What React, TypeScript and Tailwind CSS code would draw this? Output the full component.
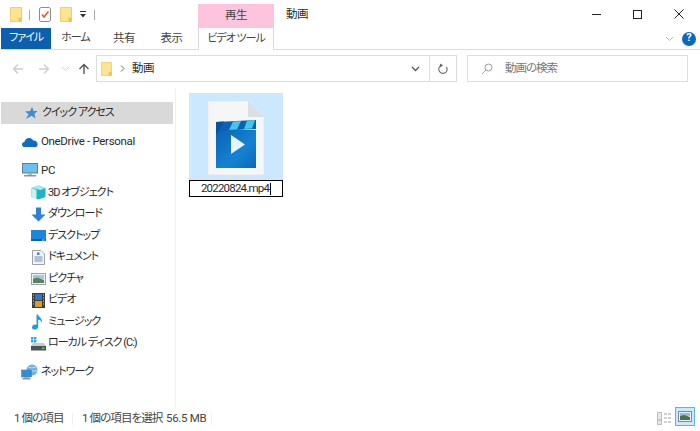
import { ReactNode } from 'react';

const FolderIcon = ({ w = 12, h = 15 }: { w?: number; h?: number }) => (
  <svg width={w} height={h} viewBox="0 0 12 15" className="shrink-0">
    <path d="M0.5 0.5H11.5V14.5H0.5Z" fill="#fde58f" stroke="#ebcf7a" />
    <path d="M8.5 10.5H11.5V14.5H8.5Z" fill="#eec34f" />
  </svg>
);

const ChecklistIcon = () => (
  <svg width="12" height="15" viewBox="0 0 12 15" className="shrink-0">
    <path d="M0.5 1.5L2 0.5H10L11.5 1.5V13.5L10 14.5H2L0.5 13.5Z" fill="#fff" stroke="#8c8c8c" />
    <path d="M3 7.5L5 10L9.5 4.5" fill="none" stroke="#e0562b" strokeWidth="1.5" />
  </svg>
);

const NavArrow = ({ dir, color }: { dir: 'left' | 'right' | 'up'; color: string }) => {
  const rot = dir === 'left' ? 0 : dir === 'right' ? 180 : 90;
  return (
    <svg width="12" height="12" viewBox="0 0 12 12" style={{ transform: `rotate(${rot}deg)` }} className="shrink-0">
      <path d="M11 6H1.5M6 1.5L1.5 6L6 10.5" fill="none" stroke={color} strokeWidth="1.4" />
    </svg>
  );
};

const SmallChevron = ({ color, width = 1 }: { color: string; width?: number }) => (
  <svg width="9" height="6" viewBox="0 0 9 6" className="shrink-0">
    <path d="M1 1L4.5 4.5L8 1" fill="none" stroke={color} strokeWidth={width} />
  </svg>
);

const StarIcon = () => (
  <svg width="14" height="14" viewBox="0 0 14 14">
    <path d="M8 0.8L9.6 5H13.6L10.4 7.8L11.6 12.6L7.6 9.8L2 13L4.6 8.2L1 5.4L6.2 5Z" fill="#3b8ed8" />
  </svg>
);

const CloudIcon = () => (
  <svg width="16" height="10" viewBox="0 0 16 10">
    <path d="M3 10C1 10 0 8.8 0 7.4C0 6 1 5 2.4 5C3 2.4 5 1 7.2 1C9 1 10.6 2 11.2 3.6C13.6 3.4 15.6 5 15.6 7.4C15.6 9 14.6 10 13 10Z" fill="#0f6cc4" />
  </svg>
);

const PcIcon = () => (
  <svg width="16" height="14" viewBox="0 0 16 14">
    <rect x="0.5" y="0.5" width="15" height="9.5" fill="#6cc0f0" stroke="#5f7f99" />
    <rect x="6" y="10" width="4" height="2" fill="#a9b6c2" />
    <rect x="2" y="12" width="12" height="1.5" fill="#8796a3" />
  </svg>
);

const CubeIcon = () => (
  <svg width="15" height="15" viewBox="0 0 15 15">
    <path d="M7.5 0.5L14.5 3V12L7.5 14.5L0.5 12V3Z" fill="#1fb3c8" />
    <path d="M0.5 3L7.5 0.5L14.5 3L9.5 5L0.5 3Z" fill="#a5e8ee" />
    <path d="M0.5 3L5.5 5V14L0.5 12Z" fill="#c9f0f3" />
  </svg>
);

const DownloadIcon = () => (
  <svg width="15" height="15" viewBox="0 0 15 15">
    <path d="M5 0.5H10V7.5H14.5L7.5 14.5L0.5 7.5H5Z" fill="#2f7fd6" />
  </svg>
);

const DesktopIcon = () => (
  <svg width="15" height="11" viewBox="0 0 15 11">
    <rect x="0" y="0" width="15" height="11" fill="#1a86dc" />
    <rect x="0" y="9" width="15" height="2" fill="#0d5fa8" />
    <rect x="11" y="9.5" width="2.5" height="1" fill="#bfe0f5" />
  </svg>
);

const DocIcon = () => (
  <svg width="13" height="15" viewBox="0 0 13 15">
    <path d="M0.5 0.5H9L12.5 4V14.5H0.5Z" fill="#f2f4f6" stroke="#9aa3ad" />
    <path d="M2.5 7H10.5M2.5 9H10.5M2.5 11H10.5" stroke="#6f8fb0" />
    <path d="M5 2.5H7.5V5H5Z" fill="#3f86c8" />
  </svg>
);

const PictureIcon = () => (
  <svg width="15" height="12" viewBox="0 0 15 12">
    <rect x="0.5" y="0.5" width="14" height="11" fill="#eef1f3" stroke="#9aa3ad" />
    <rect x="2" y="2" width="11" height="4" fill="#9cc9ea" />
    <path d="M2 6L6 4.5L13 7V10H2Z" fill="#5f7f5a" />
  </svg>
);

const FilmIcon = () => (
  <svg width="13" height="15" viewBox="0 0 13 15">
    <rect x="0" y="0" width="13" height="15" fill="#3d3d3d" />
    <rect x="3" y="1" width="7" height="6" fill="#2f76c0" />
    <rect x="3" y="8" width="7" height="6" fill="#d89a2c" />
    <path d="M1 2H2M1 5H2M1 8H2M1 11H2M11 2H12M11 5H12M11 8H12M11 11H12" stroke="#d8d8d8" />
  </svg>
);

const NoteIcon = () => (
  <svg width="12" height="16" viewBox="0 0 12 16">
    <path d="M4.5 0.5H6C6.4 3 11 4.5 10 9C9.4 7 8 6 6.2 5.6V12.5C6.2 14.4 4.6 15.6 2.8 15.6C1.2 15.6 0 14.8 0 13.4C0 11.8 1.6 10.6 3.2 10.6C3.8 10.6 4.2 10.7 4.5 10.9Z" fill="#1d9be0" />
  </svg>
);

const DriveIcon = () => (
  <svg width="17" height="15" viewBox="0 0 17 15">
    <path d="M1 1H3.4V3.4H1ZM4 1H6.4V3.4H4ZM1 4H3.4V6.4H1ZM4 4H6.4V6.4H4Z" fill="#2fa6e8" />
    <path d="M3 7H14L16 10H1Z" fill="#c9cdd1" />
    <rect x="1" y="10" width="15" height="4.5" fill="#4d5257" />
    <rect x="12" y="11.5" width="2.5" height="1.5" fill="#5fd35f" />
  </svg>
);

const NetworkIcon = () => (
  <svg width="18" height="16" viewBox="0 0 18 16">
    <circle cx="11" cy="6" r="5.5" fill="#6fb2dc" />
    <path d="M7 3C9 4 12 4 15 3M6 7H16" stroke="#d7ecf8" strokeWidth="0.8" fill="none" />
    <rect x="0.5" y="6" width="10" height="7" fill="#2e8fd6" stroke="#5f7f99" strokeWidth="0.6" />
    <rect x="3" y="13" width="5" height="1" fill="#a9b6c2" />
    <rect x="1.5" y="14" width="8" height="1.5" fill="#8796a3" />
  </svg>
);

const VideoFileIcon = () => (
  <svg width="56" height="74" viewBox="0 0 56 74">
    <defs>
      <linearGradient id="clapBody" x1="0" y1="0" x2="1" y2="1">
        <stop offset="0%" stopColor="#0a62b4" />
        <stop offset="60%" stopColor="#1583d2" />
        <stop offset="100%" stopColor="#0b67b8" />
      </linearGradient>
    </defs>
    <path d="M0 0H40L56 16V74H0Z" fill="#f5f6f7" stroke="#e4e6e8" strokeWidth="0.6" />
    <path d="M40 0L56 16H40Z" fill="#dcdfe2" />
    <path d="M8 29H48V67H8Z" fill="url(#clapBody)" />
    <path d="M8 21L48 19V28L8 30Z" fill="#0a62b0" />
    <path d="M25 20.5L33 20L29 28.5L21 29ZM39 19.5L47 19L44 27.5L36 28Z" fill="#45c5ea" />
    <path d="M8 21L16 20.5L8 34Z" fill="#07529a" />
    <path d="M23 34L37 43.5L23 53Z" fill="#eaf3fb" />
  </svg>
);

type Item = { label: string; icon: ReactNode; sub?: boolean; active?: boolean; gapTop?: boolean; latin?: boolean };

const items: Item[] = [
  { label: 'クイック アクセス', icon: <StarIcon />, active: true },
  { label: 'OneDrive - Personal', icon: <CloudIcon />, gapTop: true, latin: true },
  { label: 'PC', icon: <PcIcon />, gapTop: true, latin: true },
  { label: '3D オブジェクト', icon: <CubeIcon />, sub: true },
  { label: 'ダウンロード', icon: <DownloadIcon />, sub: true },
  { label: 'デスクトップ', icon: <DesktopIcon />, sub: true },
  { label: 'ドキュメント', icon: <DocIcon />, sub: true },
  { label: 'ピクチャ', icon: <PictureIcon />, sub: true },
  { label: 'ビデオ', icon: <FilmIcon />, sub: true },
  { label: 'ミュージック', icon: <NoteIcon />, sub: true },
  { label: 'ローカル ディスク (C:)', icon: <DriveIcon />, sub: true },
  { label: 'ネットワーク', icon: <NetworkIcon />, gapTop: true },
];

function SidebarRow({ item }: { item: Item }) {
  return (
    <div
      className={`flex h-[21.5px] items-center whitespace-nowrap ${item.gapTop ? 'mt-[7.3px]' : ''} ${item.label === 'PC' ? 'mb-px' : ''} ${item.active ? 'bg-[#d9d9d9]' : ''}`}
    >
      <div className={`flex w-[18px] justify-center ${item.sub ? 'ml-[28px]' : item.active ? 'ml-[21px]' : 'ml-[20px]'}`}>
        {item.icon}
      </div>
      <span className={`${item.sub ? 'ml-[1px]' : 'ml-[2px]'} ${item.latin ? 'tracking-[-0.33px]' : 'text-[11px] tracking-[-1px]'}`}>
        {item.label}
      </span>
    </div>
  );
}

export default function App() {
  return (
    <div className="flex h-[431px] w-[700px] flex-col overflow-hidden whitespace-nowrap bg-white text-[11.5px] tracking-[-0.55px] text-[#2a2a2a] [font-family:'Roboto','Noto_Sans_CJK_JP',sans-serif] [font-feature-settings:'palt']">
      {/* Title bar */}
      <div className="flex h-[28px] items-end">
        <div className="mb-[6px] ml-[10px] flex items-center">
          <FolderIcon />
          <div className="ml-[7px] h-[10px] w-px bg-[#a8a8a8]" />
          <div className="ml-[9px]"><ChecklistIcon /></div>
          <div className="ml-[9px]"><FolderIcon /></div>
          <svg width="6" height="7" viewBox="0 0 6 7" className="ml-[8px]">
            <path d="M0 0H6V1H0ZM0 3H6L3 6.5Z" fill="#333" />
          </svg>
          <div className="ml-[8px] h-[10px] w-px bg-[#a8a8a8]" />
        </div>
        <div className="ml-[103px] flex h-[24px] w-[76px] items-center justify-center bg-[#ffc4dd] text-[#444]">再生</div>
        <div className="mb-[5px] ml-[12px]">動画</div>
        <div className="ml-auto flex h-full">
          <div className="flex w-[41px] items-center justify-center">
            <div className="h-px w-[9px] bg-[#222]" />
          </div>
          <div className="flex w-[41px] items-center justify-center">
            <div className="h-[9px] w-[9px] border border-[#222]" />
          </div>
          <div className="mr-[1px] flex w-[41px] items-center justify-center">
            <svg width="10" height="10" viewBox="0 0 10 10">
              <path d="M0.5 0.5L9.5 9.5M9.5 0.5L0.5 9.5" stroke="#222" />
            </svg>
          </div>
        </div>
      </div>

      {/* Ribbon tabs */}
      <div className="flex h-[22px] items-stretch border-b border-[#dcdcdc]">
        <div className="ml-px flex w-[50px] items-center justify-center bg-[#0b5fae] text-[11px] tracking-[-1px] text-white">ファイル</div>
        <div className="ml-[12px] flex w-[25px] items-center justify-center text-[11px] tracking-[-1px] text-[#444]">ホーム</div>
        <div className="ml-[26px] flex w-[20px] items-center justify-center text-[#444]">共有</div>
        <div className="ml-[27px] flex w-[21px] items-center justify-center text-[#444]">表示</div>
        <div className="relative z-10 ml-[16px] -mb-px flex w-[76px] items-center justify-center border-x border-[#dcdcdc] bg-white text-[11px] tracking-[-1px] text-[#444]">
          ビデオ ツール
        </div>
        <div className="ml-auto mr-[4px] flex items-center">
          <SmallChevron color="#b5b5b5" />
          <div className="ml-[8px] flex h-[14px] w-[14px] items-center justify-center rounded-full bg-[#0b67c2] text-[11px] font-bold tracking-normal text-white">?</div>
        </div>
      </div>

      {/* Address row */}
      <div className="flex h-[38px] items-center pb-[1px]">
        <div className="ml-[12px] flex items-center">
          <NavArrow dir="left" color="#cfcfcf" />
          <div className="ml-[14px]"><NavArrow dir="right" color="#cfcfcf" /></div>
          <div className="ml-[11px]"><SmallChevron color="#d4d4d4" /></div>
          <div className="ml-[8px]"><NavArrow dir="up" color="#555" /></div>
        </div>
        <div className="ml-[6px] flex h-[27px] w-[361px] items-center border border-[#dedede] shadow-[0_0_1px_#eee]">
          <div className="ml-[4px]"><FolderIcon w={11} h={14} /></div>
          <svg width="5" height="7" viewBox="0 0 5 7" className="ml-[8px]">
            <path d="M1 0.5L4 3.5L1 6.5" fill="none" stroke="#666" />
          </svg>
          <span className="ml-[7px]">動画</span>
          <div className="ml-auto flex h-full items-center">
            <SmallChevron color="#555" width={1.3} />
            <div className="ml-[9px] flex h-full w-[27px] items-center justify-center border-l border-[#dedede]">
              <svg width="12" height="12" viewBox="0 0 12 12">
                <path d="M4 2.5A4.2 4.2 0 1 0 8.5 2.8" fill="none" stroke="#666" strokeWidth="1.1" transform="rotate(20 6 6)" />
                <path d="M3 0.5L6 2.5L3 4.5Z" fill="#666" />
              </svg>
            </div>
          </div>
        </div>
        <div className="ml-[10px] flex h-[27px] w-[221px] items-center border border-[#dedede]">
          <svg width="12" height="12" viewBox="0 0 12 12" className="ml-[13px]">
            <circle cx="7.5" cy="4.5" r="3.5" fill="none" stroke="#9a9a9a" />
            <path d="M5 7L1 11" stroke="#c09a7a" />
          </svg>
          <span className="ml-[12px] tracking-[-1px] text-[#777]">動画の検索</span>
        </div>
      </div>

      {/* Body */}
      <div className="flex min-h-0 flex-1">
        <div className="w-[176px] shrink-0 border-r border-[#f0f0f0] pl-px pr-[2px] pt-[14px]">
          {items.map((item) => (
            <SidebarRow key={item.label} item={item} />
          ))}
        </div>
        <div className="pl-[13px] pt-[5px]">
          <div className="flex w-[94px] flex-col items-center">
            <div className="flex h-[87px] w-full justify-center bg-[#cce8ff] pr-[1px] pt-[8px]">
              <VideoFileIcon />
            </div>
            <div className="flex h-[17px] w-full items-center justify-center border border-black bg-white tracking-[-0.8px]">
              <span>20220824.mp4</span>
              <div className="ml-px h-[12px] w-px bg-black" />
            </div>
          </div>
        </div>
      </div>

      {/* Status bar */}
      <div className="flex h-[23px] items-start pt-[2px] text-[#444]">
        <span className="ml-[14px] w-[58px] tracking-[-0.9px]">1 個の項目</span>
        <div className="mt-[3px] h-[12px] w-px bg-[#eeeeee]" />
        <span className="ml-[9px] w-[78px] tracking-[-0.9px]">1 個の項目を選択</span>
        <span className="ml-[6px] w-[37px] tracking-[-0.3px]">56.5 MB</span>
        <div className="ml-[8px] mt-[3px] h-[12px] w-px bg-[#eeeeee]" />
        <div className="ml-auto mr-[5px] flex items-center">
          <svg width="15" height="13" viewBox="0 0 15 13">
            <rect x="0.5" y="0.5" width="4" height="12" fill="#e8e8e8" stroke="#bdbdbd" />
            <path d="M1 8H4" stroke="#e58a8a" />
            <path d="M7 2H15M7 6H15M7 10H15" stroke="#a0a0a0" strokeDasharray="3 1" />
          </svg>
          <div className="-mt-[3px] ml-[3px] flex h-[19px] w-[20px] items-center justify-center border border-[#5cb4ea] bg-[#cce8ff]">
            <svg width="14" height="11" viewBox="0 0 14 11">
              <rect x="0.5" y="0.5" width="13" height="10" fill="#eef1f3" stroke="#7f8a94" />
              <rect x="2" y="2" width="10" height="3" fill="#8cc0e8" />
              <path d="M2 5L6 4L12 6V9H2Z" fill="#4f6f4f" />
            </svg>
          </div>
        </div>
      </div>
    </div>
  );
}
